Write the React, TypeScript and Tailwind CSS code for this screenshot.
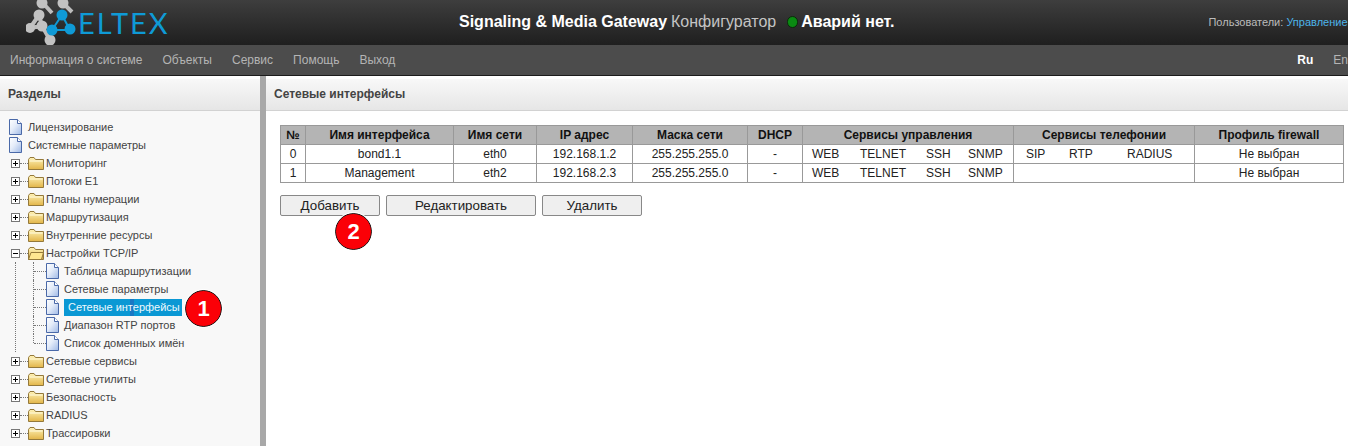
import { type FC } from 'react';

const FileIcon: FC = () => (
  <svg width="13" height="16" viewBox="0 0 13 16" className="shrink-0">
    <defs>
      <linearGradient id="fileFill" x1="0" y1="0" x2="1" y2="1">
        <stop offset="0" stopColor="#ffffff" />
        <stop offset="0.45" stopColor="#e4ecf9" />
        <stop offset="1" stopColor="#9fb9e6" />
      </linearGradient>
    </defs>
    <path d="M0.5 0.5H8.5L12.5 4.5V15.5H0.5Z" fill="url(#fileFill)" stroke="#4a69a8" />
    <path d="M8.5 0.5V4.5H12.5" fill="#ffffff" stroke="#4a69a8" />
  </svg>
);

const FolderIcon: FC<{ open?: boolean }> = ({ open }) => (
  <svg width="16" height="14" viewBox="0 0 16 14" className="shrink-0">
    <defs>
      <linearGradient id="folderFill" x1="0" y1="0" x2="0" y2="1">
        <stop offset="0" stopColor="#fff3b8" />
        <stop offset="1" stopColor="#e2b548" />
      </linearGradient>
    </defs>
    <path d="M0.5 3.5L2 1.5H6L7.5 3.5H15.5V13.5H0.5Z" fill="url(#folderFill)" stroke="#94793a" />
    {open ? (
      <path d="M0.5 13.5L3 6.5H15.5L13.5 13.5Z" fill="#ffe68f" stroke="#94793a" />
    ) : (
      <path d="M1.5 5H14.5" stroke="#fffbe0" />
    )}
  </svg>
);

const ToggleBox: FC<{ open?: boolean }> = ({ open }) => (
  <span className="relative block w-[9px] h-[9px] shrink-0 border border-[#777] bg-white">
    <span className="absolute left-[1px] top-[3px] w-[5px] h-[1px] bg-black" />
    {!open && <span className="absolute left-[3px] top-[1px] w-[1px] h-[5px] bg-black" />}
  </span>
);

const FolderRow: FC<{ label: string; open?: boolean }> = ({ label, open }) => (
  <div className="h-[18px] flex items-center pl-[11px]">
    <ToggleBox open={open} />
    <span className="w-[8px] border-t border-dotted border-[#777]" />
    <FolderIcon open={open} />
    <span className="ml-[2px]">{label}</span>
  </div>
);

const ChildRow: FC<{ label: string; active?: boolean; last?: boolean }> = ({ label, active, last }) => (
  <div className="h-[18px] flex items-center relative">
    <span className={`absolute left-[33px] top-0 border-l border-dotted border-[#777] ${last ? 'h-[9px]' : 'h-[18px]'}`} />
    <span className="ml-[34px] w-[12px] border-t border-dotted border-[#777]" />
    <FileIcon />
    {active ? (
      <span className="relative ml-[5px] w-[118px] h-[17px] pl-[4px] leading-[17px] bg-[#0a98d4] text-[#eef8fd]">
        <span className="absolute left-[66px] top-0 w-[4px] h-[17px] bg-[#1a78c4]" />
        <span className="relative">{label}</span>
      </span>
    ) : (
      <span className="ml-[5px]">{label}</span>
    )}
  </div>
);

const PanelTitle: FC<{ title: string }> = ({ title }) => (
  <div className="h-[35px] pt-[3px] bg-white">
    <div className="h-[32px] flex items-center pl-[8px] pb-[2px] bg-gradient-to-b from-[#f8f8f8] to-[#e6e6e6] border-b border-[#d2d2d2] text-[12px] font-bold text-[#444]">
      {title}
    </div>
  </div>
);

const Badge: FC<{ n: number; className: string }> = ({ n, className }) => (
  <div className={`absolute w-[37px] h-[37px] rounded-full bg-[#fb0007] border-[1.5px] border-[#111] outline outline-1 outline-white flex items-center justify-center text-white font-bold text-[22px] ${className}`}>
    {n}
  </div>
);

const Logo: FC = () => (
  <svg width="60" height="46" viewBox="0 0 60 46" className="shrink-0">
    <g stroke="#bdbdbd" strokeWidth="4" fill="none">
      <path d="M16 2L26 13M37 3L46 12M13 15L4 28L16 26L24 40M13 15L16 26" />
    </g>
    <g fill="#c2c2c2">
      <circle cx="16" cy="3" r="5.5" />
      <circle cx="37" cy="3" r="5.5" />
      <circle cx="13" cy="15" r="5.5" />
      <circle cx="4" cy="28" r="5" />
      <circle cx="16" cy="26" r="5.5" />
      <circle cx="24" cy="40" r="5.5" />
    </g>
    <g stroke="#0f9ad6" strokeWidth="2" fill="none">
      <path d="M36 15L26 30H44Z" />
    </g>
    <g fill="#0f9ad6">
      <circle cx="36" cy="15" r="5.5" />
      <circle cx="26" cy="30" r="5.5" />
      <circle cx="44" cy="29" r="5.5" />
    </g>
  </svg>
);

const servicesMgmt = ['WEB', 'TELNET', 'SSH', 'SNMP'];

const rows = [
  { id: '0', name: 'bond1.1', net: 'eth0', ip: '192.168.1.2', tel: true },
  { id: '1', name: 'Management', net: 'eth2', ip: '192.168.2.3', tel: false },
];

const headers = ['№', 'Имя интерфейса', 'Имя сети', 'IP адрес', 'Маска сети', 'DHCP', 'Сервисы управления', 'Сервисы телефонии', 'Профиль firewall'];
const widths = ['w-[25px]', 'w-[148px]', 'w-[83px]', 'w-[96px]', 'w-[115px]', 'w-[55px]', 'w-[211px]', 'w-[181px]', 'w-[149px]'];

const treeTop = ['Мониторинг', 'Потоки Е1', 'Планы нумерации', 'Маршрутизация', 'Внутренние ресурсы'];
const treeBottom = ['Сетевые сервисы', 'Сетевые утилиты', 'Безопасность', 'RADIUS', 'Трассировки'];

export default function App() {
  return (
    <div className="relative w-[1348px] h-[446px] overflow-hidden bg-white font-['Liberation_Sans',Arial,sans-serif]">
      {/* header */}
      <header className="h-[45px] flex items-start overflow-hidden bg-gradient-to-b from-[#3e3e3e] to-[#1f1f1f]">
        <div className="ml-[26px] w-[433px] shrink-0 flex items-start">
          <Logo />
          <span className="-ml-[8px] mt-[6px] text-[29px] leading-[34px] tracking-[2px] font-['Lato',sans-serif] font-normal text-[#0f9ad6]">ELTEX</span>
        </div>
        <div className="mt-[12px] h-[20px] flex items-center shrink-0 text-[16px]">
          <span className="font-bold text-white">Signaling &amp; Media Gateway</span>
          <span className="ml-[4px] text-[#c4c4c4]">Конфигуратор</span>
          <span className="ml-[11px] w-[11px] h-[12px] rounded-full bg-[#0a8a12] border border-[#0a2a0a]" />
          <span className="ml-[3px] font-bold text-white">Аварий нет.</span>
        </div>
        <div className="ml-[314px] mt-[15px] shrink-0 text-[11px] leading-[14px] text-[#bbb] whitespace-nowrap">
          Пользователи: <span className="text-[#4db4ea]">Управление</span>
        </div>
      </header>

      {/* menu */}
      <nav className="h-[31px] flex items-start pt-[7px] pl-[10px] bg-[#4c4c4c] border-b border-[#1c1c1c] text-[12px] leading-[16px] text-[#b4b4b4] whitespace-nowrap">
        <span>Информация о системе</span>
        <span className="ml-[20px]">Объекты</span>
        <span className="ml-[20px]">Сервис</span>
        <span className="ml-[20px]">Помощь</span>
        <span className="ml-[20px]">Выход</span>
        <span className="ml-[902px] font-bold text-white">Ru</span>
        <span className="ml-[20px]">En</span>
      </nav>

      <div className="flex h-[370px]">
        {/* sections tree */}
        <aside className="w-[260px] shrink-0 bg-[#f8f8f8] text-[11px] text-[#444]">
          <PanelTitle title="Разделы" />
          <div className="pt-[7px]">
            <div className="h-[18px] flex items-center pl-[9px]">
              <FileIcon />
              <span className="ml-[6px]">Лицензирование</span>
            </div>
            <div className="h-[18px] flex items-center pl-[9px]">
              <FileIcon />
              <span className="ml-[6px]">Системные параметры</span>
            </div>
            {treeTop.map((item) => (
              <FolderRow key={item} label={item} />
            ))}
            <FolderRow label="Настройки TCP/IP" open />
            <div className="relative">
              <span className="absolute left-[15px] top-0 bottom-0 border-l border-dotted border-[#777]" />
              <ChildRow label="Таблица маршрутизации" />
              <ChildRow label="Сетевые параметры" />
              <ChildRow label="Сетевые интерфейсы" active />
              <ChildRow label="Диапазон RTP портов" />
              <ChildRow label="Список доменных имён" last />
            </div>
            {treeBottom.map((item) => (
              <FolderRow key={item} label={item} />
            ))}
          </div>
        </aside>

        <div className="w-[6px] shrink-0 bg-[#a8a8a8]" />

        {/* main panel */}
        <main className="flex-1 min-w-0 bg-white">
          <PanelTitle title="Сетевые интерфейсы" />
          <div className="pt-[14px] pl-[14px]">
            <table className="w-[1063px] table-fixed border-collapse text-[12px] text-[#222] text-center">
              <thead>
                <tr className="h-[19px] bg-[#b4b4b4]">
                  {headers.map((h, i) => (
                    <th key={h} className={`${widths[i]} p-0 border border-[#999] font-bold text-[#111]`}>{h}</th>
                  ))}
                </tr>
              </thead>
              <tbody>
                {rows.map((r) => (
                  <tr key={r.id} className="h-[19px]">
                    <td className="p-0 border border-[#999]">{r.id}</td>
                    <td className="p-0 border border-[#999]">{r.name}</td>
                    <td className="p-0 border border-[#999]">{r.net}</td>
                    <td className="p-0 border border-[#999]">{r.ip}</td>
                    <td className="p-0 border border-[#999]">255.255.255.0</td>
                    <td className="p-0 border border-[#999]">-</td>
                    <td className="p-0 border border-[#999]">
                      <div className="grid grid-cols-[48px_66px_42px_44px] pl-[9px] text-left">
                        {servicesMgmt.map((s) => (
                          <span key={s}>{s}</span>
                        ))}
                      </div>
                    </td>
                    <td className="p-0 border border-[#999]">
                      {r.tel && (
                        <div className="grid grid-cols-[43px_58px_60px] pl-[12px] text-left">
                          <span>SIP</span>
                          <span>RTP</span>
                          <span>RADIUS</span>
                        </div>
                      )}
                    </td>
                    <td className="p-0 border border-[#999]">Не выбран</td>
                  </tr>
                ))}
              </tbody>
            </table>
            <div className="mt-[12px] flex gap-[6px] text-[13.33px] text-[#222]">
              <button className="w-[100px] h-[21px] rounded-[2px] border border-[#888] bg-[#efefef]">Добавить</button>
              <button className="w-[150px] h-[21px] rounded-[2px] border border-[#888] bg-[#efefef]">Редактировать</button>
              <button className="w-[100px] h-[21px] rounded-[2px] border border-[#888] bg-[#efefef]">Удалить</button>
            </div>
          </div>
        </main>
      </div>

      <Badge n={1} className="left-[185px] top-[290px]" />
      <Badge n={2} className="left-[335px] top-[213px]" />
    </div>
  );
}
